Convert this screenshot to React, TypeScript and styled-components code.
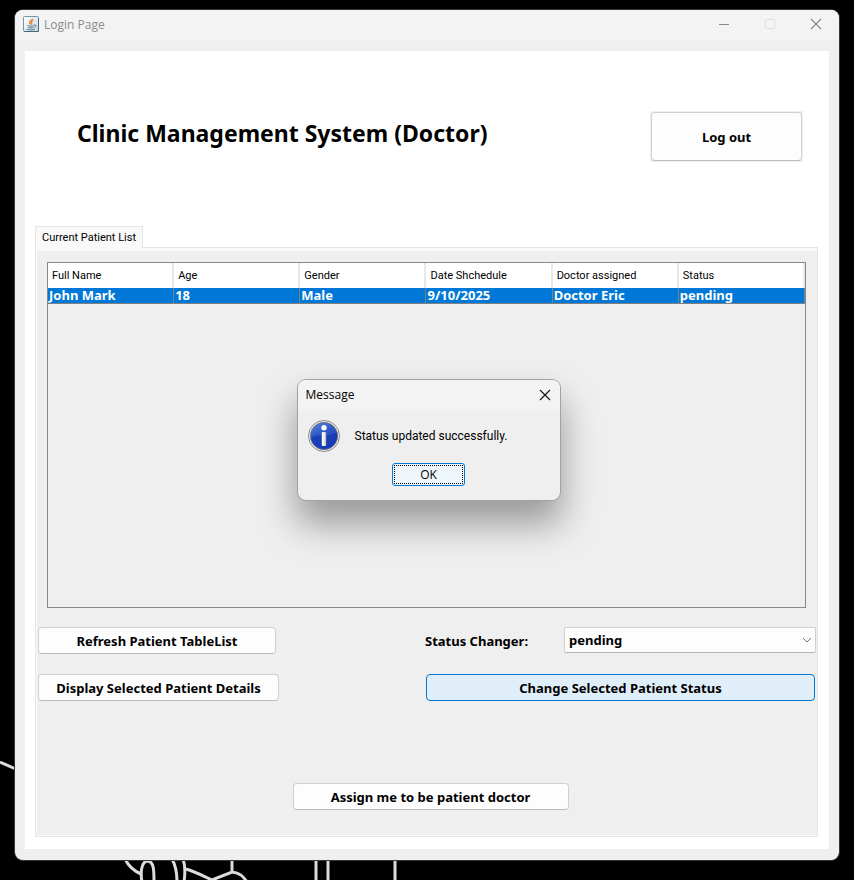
import React, { useState } from 'react';
import styled, { createGlobalStyle } from 'styled-components';

const GlobalStyle = createGlobalStyle`
  * { box-sizing: border-box; }
  body { margin: 0; background: #000; color: #000; font-family: "Open Sans", "Noto Sans", sans-serif; }
  button, select, input { font: inherit; color: inherit; margin: 0; }
`;

const boldFont = '"Noto Sans", "Open Sans", sans-serif';
const smallFont = 'Roboto, "Open Sans", sans-serif';

const Desktop = styled.div`
  position: relative;
  min-height: 100vh;
  display: flex;
  padding: 10px 15px 20px;
  overflow: hidden;
`;

const Wallpaper = styled.svg`
  position: absolute;
  left: 0;
  bottom: 0;
  width: 420px;
  height: 140px;
`;

const Window = styled.main`
  position: relative;
  flex: 1;
  min-width: 0;
  display: flex;
  flex-direction: column;
  background: #efefef;
  border-radius: 8px;
  overflow: hidden;
  box-shadow: 0 0 0 1px #363636;
`;

const TitleBar = styled.header`
  display: flex;
  align-items: center;
  height: 30px;
  padding: 0 8px 2px;
  gap: 5px;
  background: #f3f3f3;
  color: #8b8b8b;
  font-size: 12px;
`;

const WindowTitle = styled.span`
  flex: 1;
`;

const CaptionButtons = styled.div`
  display: flex;
  gap: 30px;
  padding-right: 7px;
`;

const CaptionButton = styled.button`
  display: grid;
  place-items: center;
  width: 16px;
  height: 16px;
  padding: 0;
  border: 0;
  background: none;
`;

const Content = styled.div`
  flex: 1;
  display: flex;
  flex-direction: column;
  margin: 11px 10px;
  padding: 60px 11px 12px 10px;
  background: #fff;
`;

const Banner = styled.div`
  display: flex;
  align-items: center;
  justify-content: space-between;
  padding: 0 15px 0 42px;
  margin-bottom: 64px;
`;

const Heading = styled.h1`
  margin: 0;
  font-family: ${boldFont};
  font-size: 23px;
  line-height: 32px;
  padding-bottom: 8px;
  font-weight: 700;
`;

const Button = styled.button<{ $hot?: boolean; $width?: number }>`
  height: 27px;
  width: ${(p) => (p.$width ? `${p.$width}px` : 'auto')};
  padding: 0;
  border: 1px solid ${(p) => (p.$hot ? '#0078d4' : '#d0d0d0')};
  border-bottom-color: ${(p) => (p.$hot ? '#0078d4' : '#bababa')};
  border-radius: 4px;
  background: ${(p) => (p.$hot ? '#e0eef9' : '#fdfdfd')};
  font-family: ${boldFont};
  font-size: 13px;
  font-weight: 700;
  line-height: 18px;
  white-space: nowrap;
`;

const LogoutFrame = styled.div`
  padding: 1px;
  background: #f0f0f0;
`;

const LogoutButton = styled(Button)`
  display: block;
  width: 151px;
  height: 49px;
`;

const Tab = styled.button`
  position: relative;
  z-index: 1;
  align-self: flex-start;
  height: 22px;
  margin-bottom: -1px;
  padding: 0 6px;
  border: 1px solid #e5e5e5;
  border-bottom: 0;
  background: #f9f9f9;
  font-family: ${smallFont};
  font-size: 11px;
  line-height: 18px;
`;

const Pane = styled.section`
  flex: 1;
  display: flex;
  flex-direction: column;
  padding: 11px 1px 26px 2px;
  border: 1px solid #e5e5e5;
  background: #efefef;
  box-shadow: inset 0 3px 0 #f9f9f9, inset 1px -1px 0 #f9f9f9;
`;

const TableFrame = styled.div`
  flex: 1;
  min-height: 200px;
  margin: 3px 10px 19px 9px;
  border: 1px solid #828790;
`;

const Table = styled.table`
  width: 100%;
  table-layout: fixed;
  border-collapse: separate;
  border-spacing: 0;
`;

const HeadCell = styled.th`
  height: 25px;
  padding: 1px 4px 0;
  border-right: 2px solid #e8e8e8;
  background: #fff;
  font-family: ${smallFont};
  font-size: 11px;
  font-weight: 400;
  line-height: 16px;
  text-align: left;
`;

const Cell = styled.td`
  height: 16px;
  padding: 0 1px;
  border-right: 1px solid #808080;
  border-bottom: 1px solid #808080;
  background: #0078d7;
  color: #fff;
  font-family: ${boldFont};
  font-size: 13px;
  font-weight: 700;
  line-height: 15px;
`;

const Controls = styled.div`
  display: grid;
  grid-template-columns: 387fr 391fr;
  row-gap: 20px;
`;

const StatusRow = styled.div`
  display: flex;
  align-items: center;
  justify-content: space-between;
`;

const StatusLabel = styled.label`
  font-family: ${boldFont};
  font-size: 13px;
  font-weight: 700;
  line-height: 18px;
`;

const SelectBox = styled.div`
  position: relative;
  width: 252px;
  margin-bottom: 1px;
`;

const Select = styled.select`
  display: block;
  appearance: none;
  width: 100%;
  height: 26px;
  padding: 0 4px;
  border: 1px solid #d0d0d0;
  border-bottom-color: #b4b4b4;
  border-radius: 2px;
  background: #fdfdfd;
  font-family: ${boldFont};
  font-size: 13px;
  font-weight: 700;
`;

const Chevron = styled.svg`
  position: absolute;
  right: 4px;
  top: 10px;
  pointer-events: none;
`;

const RightColumn = styled.div`
  display: grid;
  padding: 0 1px;
`;

const AssignRow = styled.div`
  display: flex;
  justify-content: center;
  padding: 82px 0 0 7px;
`;

const Overlay = styled.div`
  position: absolute;
  inset: 0;
  display: grid;
  place-items: center;
  padding: 10px 0 0 3px;
`;

const Dialog = styled.div`
  width: 262px;
  border-radius: 8px;
  background: #efefef;
  overflow: hidden;
  box-shadow: 0 0 0 1px #a2a2a2, 0 22px 36px 2px rgba(0, 0, 0, 0.36);
`;

const DialogTitle = styled.div`
  display: flex;
  align-items: center;
  justify-content: space-between;
  height: 31px;
  padding: 0 7px 2px 8px;
  background: #f3f3f3;
  font-size: 12px;
`;

const DialogBody = styled.div`
  display: flex;
  align-items: center;
  gap: 14px;
  padding: 8px 9px 10px;
  font-family: ${smallFont};
  font-size: 12px;
`;

const DialogActions = styled.div`
  display: flex;
  justify-content: center;
  padding-bottom: 14px;
`;

const OkButton = styled.button`
  width: 73px;
  height: 23px;
  padding: 1px;
  border: 1px solid #0078d4;
  border-radius: 3px;
  background: #f0f7fc;
  font-size: 12px;
`;

const FocusRing = styled.span`
  display: block;
  border: 1px dotted #000;
  line-height: 17px;
`;

const columns = ['Full Name', 'Age', 'Gender', 'Date Shchedule', 'Doctor assigned', 'Status'];
const patients = [['John Mark', '18', 'Male', '9/10/2025', 'Doctor Eric', 'pending']];

const JavaIcon = () => (
  <svg width="16" height="16" viewBox="0 0 16 16" fill="none">
    <defs>
      <linearGradient id="cup" x1="0" y1="0" x2="1" y2="1">
        <stop offset="0" stopColor="#fff" />
        <stop offset="1" stopColor="#c9d8e2" />
      </linearGradient>
    </defs>
    <rect x=".5" y=".5" width="15" height="15" rx="1" fill="url(#cup)" stroke="#7795a8" />
    <path d="M1 15.5h14.5V2" stroke="#426980" />
    <path d="M9.500 2.500C10 4 6 4.500 6.500 6.500c.3 1 1 1.200 1.300 2M10.500 4.500C8 5.500 8 6.300 8.700 7.200c.3.500.1 1-.3 1.300" stroke="#e87a24" strokeWidth="1.200" />
    <path d="M4.500 9.500c1.500.8 5 .8 6.500 0M5 11.500c1.500.6 4 .6 5.500 0M3.500 13.300c2 .8 6 .8 8.500 0M11.200 9c2.600-.6 2.300 1.700.3 2.300" stroke="#56798f" />
  </svg>
);

const CloseIcon = ({ color }: { color: string }) => (
  <svg width="12" height="12" viewBox="0 0 12 12" fill="none" stroke={color} strokeWidth="1.100">
    <path d="M1 1l10 10M11 1L1 11" />
  </svg>
);

const InfoIcon = () => (
  <svg width="34" height="34" viewBox="0 0 34 34">
    <defs>
      <linearGradient id="ball" x1="0" y1="0" x2=".5" y2="1">
        <stop offset="0" stopColor="#5a86dc" />
        <stop offset=".5" stopColor="#2b57c4" />
        <stop offset="1" stopColor="#2340c4" />
      </linearGradient>
      <linearGradient id="stem" x1="0" y1="0" x2="1" y2="0">
        <stop offset="0" stopColor="#fff" />
        <stop offset=".6" stopColor="#e9e9e9" />
        <stop offset="1" stopColor="#aaa" />
      </linearGradient>
    </defs>
    <circle cx="17" cy="17" r="15.500" fill="#f4f4f4" stroke="#8a8a8a" />
    <circle cx="17" cy="17" r="13.700" fill="url(#ball)" stroke="#777" strokeWidth=".8" />
    <path d="M4 19C10 14 22 19 30 13a13.300 13.300 0 0 1-26 6z" fill="#1435ad" opacity=".65" />
    <circle cx="17" cy="8.800" r="2.700" fill="#fff" />
    <rect x="14.800" y="13" width="4.400" height="14" rx="1" fill="url(#stem)" />
  </svg>
);

export default function App() {
  const [status, setStatus] = useState('pending');
  const [open, setOpen] = useState(true);
  return (
    <>
      <GlobalStyle />
      <Desktop>
        <Wallpaper viewBox="0 0 420 140" fill="none" stroke="#dcdcdc" strokeWidth="3" aria-hidden="true">
          <path d="M0 22L18 30" />
          <path d="M125 119C129 127 134 131 141 134M142 142C140 131 142 122 147 121C154 121 154 130 154 142" />
          <path d="M172 119C176 126 177 134 177 142M183 119C186 127 185 135 184 142M186 129C196 132 203 136 212 140L232 132C240 133 243 136 247 142M232 118V132" />
          <path d="M316 118V142M328 118V142M395 118V142" />
        </Wallpaper>
        <Window>
          <TitleBar>
            <JavaIcon />
            <WindowTitle>Login Page</WindowTitle>
            <CaptionButtons>
              <CaptionButton aria-label="Minimize">
                <svg width="10" height="10"><path d="M0 5.500h10" stroke="#888" /></svg>
              </CaptionButton>
              <CaptionButton aria-label="Maximize" disabled>
                <svg width="10" height="10"><rect x=".5" y=".5" width="9" height="9" rx="1" fill="none" stroke="#dedede" /></svg>
              </CaptionButton>
              <CaptionButton aria-label="Close">
                <CloseIcon color="#888" />
              </CaptionButton>
            </CaptionButtons>
          </TitleBar>
          <Content>
            <Banner>
              <Heading>Clinic Management System (Doctor)</Heading>
              <LogoutFrame>
                <LogoutButton>Log out</LogoutButton>
              </LogoutFrame>
            </Banner>
            <Tab role="tab" aria-selected="true">Current Patient List</Tab>
            <Pane>
              <TableFrame>
                <Table>
                  <thead>
                    <tr>{columns.map((c) => <HeadCell key={c}>{c}</HeadCell>)}</tr>
                  </thead>
                  <tbody>
                    {patients.map((row) => (
                      <tr key={row[0]}>{row.map((v) => <Cell key={v}>{v}</Cell>)}</tr>
                    ))}
                  </tbody>
                </Table>
              </TableFrame>
              <Controls>
                <Button $width={238}>Refresh Patient TableList</Button>
                <StatusRow>
                  <StatusLabel htmlFor="status">Status Changer:</StatusLabel>
                  <SelectBox>
                    <Select id="status" value={status} onChange={(e) => setStatus(e.target.value)}>
                      <option>pending</option>
                      <option>completed</option>
                    </Select>
                    <Chevron width="10" height="6" viewBox="0 0 10 6" fill="none" stroke="#777">
                      <path d="M1 1l4 4 4-4" />
                    </Chevron>
                  </SelectBox>
                </StatusRow>
                <Button $width={241}>Display Selected Patient Details</Button>
                <RightColumn>
                  <Button $hot>Change Selected Patient Status</Button>
                </RightColumn>
              </Controls>
              <AssignRow>
                <Button $width={276}>Assign me to be patient doctor</Button>
              </AssignRow>
            </Pane>
          </Content>
          {open && (
            <Overlay>
              <Dialog role="dialog" aria-label="Message">
                <DialogTitle>
                  Message
                  <CaptionButton aria-label="Close message" onClick={() => setOpen(false)}>
                    <CloseIcon color="#111" />
                  </CaptionButton>
                </DialogTitle>
                <DialogBody>
                  <InfoIcon />
                  Status updated successfully.
                </DialogBody>
                <DialogActions>
                  <OkButton onClick={() => setOpen(false)}>
                    <FocusRing>OK</FocusRing>
                  </OkButton>
                </DialogActions>
              </Dialog>
            </Overlay>
          )}
        </Window>
      </Desktop>
    </>
  );
}
